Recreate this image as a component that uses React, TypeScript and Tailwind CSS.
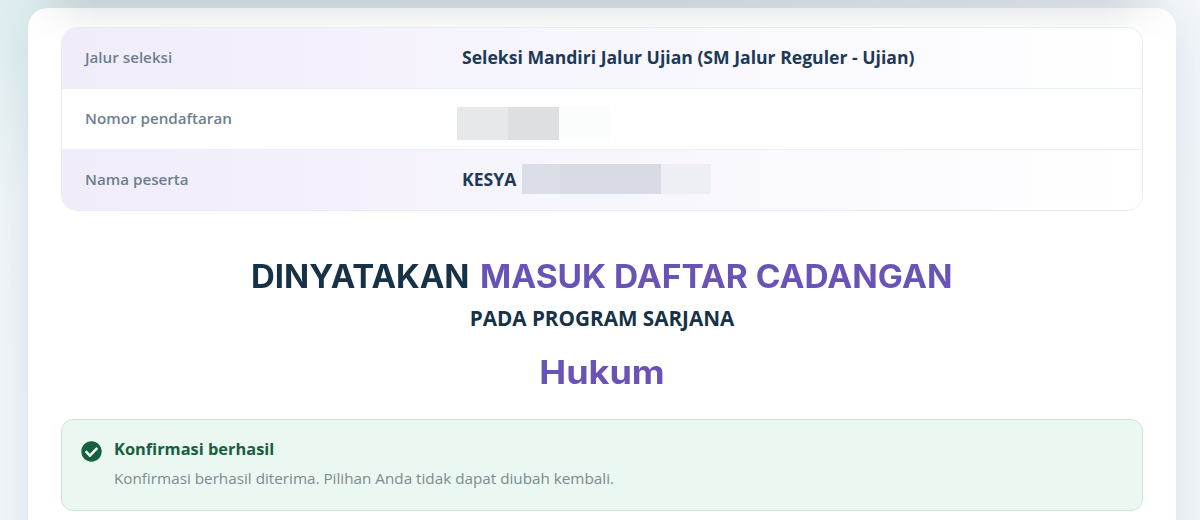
import React from 'react';
import { FaCheckCircle } from 'react-icons/fa';

const Row: React.FC<{ label: string; tinted?: boolean; children: React.ReactNode }> = ({ label, tinted, children }) => (
  <div
    className={`flex h-[61px] items-center border-b border-[#e7f0f4] pl-[23px] last:h-[60px] last:border-b-0 ${
      tinted ? 'bg-linear-to-r from-[#f0ecfa] via-[#f7f5fd] via-45% to-white' : 'bg-white'
    }`}
  >
    <dt className="w-[377px] shrink-0 pb-0.5 text-[15.2px] font-semibold text-[#6d7f8d]">{label}</dt>
    <dd className="flex items-center pb-0.5 text-[17.6px] font-bold whitespace-nowrap text-[#1c3a56]">{children}</dd>
  </div>
);

export default function App() {
  return (
    <div className="h-[520px] overflow-hidden bg-linear-to-r from-[#dcecee] via-[#e2e9ee] to-[#f2f6fa] font-['Open_Sans','Noto_Sans',sans-serif]">
      <div className="relative h-full bg-linear-to-b from-[#f2f6f9]/10 via-[#f2f6f9]/90 via-40% to-[#f2f6f9]">
        {/* Shadow of the header above the card */}
        <div className="pointer-events-none absolute inset-x-6 top-0 z-10 h-10 bg-linear-to-b from-[#26343f]/11 to-transparent mask-x-from-94% mask-x-to-100%" />

        <div className="px-7 pt-2 pr-6">
          <main className="h-[560px] rounded-t-[20px] bg-white px-[33px] pt-[19px] shadow-[0_12px_40px_rgba(60,100,120,0.14)]">
            <dl className="relative z-20 h-[184px] overflow-hidden rounded-2xl border border-[#e6edf1]">
              <Row label="Jalur seleksi" tinted>
                Seleksi Mandiri Jalur Ujian (SM Jalur Reguler - Ujian)
              </Row>
              <Row label="Nomor pendaftaran">
                <div className="mt-2.5 -ml-[5px] flex h-[33px]">
                  <span className="w-[51px] bg-[#e6e8ea]" />
                  <span className="w-[51px] bg-[#dde0e3]" />
                  <span className="w-[51px] bg-[#fbfcfc]" />
                </div>
              </Row>
              <Row label="Nama peserta" tinted>
                <span className="w-[60px]">KESYA</span>
                <div className="flex h-[30px]">
                  <span className="w-[38px] bg-[#dbdee6]" />
                  <span className="w-[101px] bg-[#d8dbe4]" />
                  <span className="w-[50px] bg-[#eeeff4]" />
                </div>
              </Row>
            </dl>

            <section className="h-[208px] pt-[46px] text-center">
              <h1 className="flex h-10 items-center justify-center gap-[10px] font-['Inter',sans-serif] text-[32px] font-bold whitespace-nowrap text-[#173246] [font-optical-sizing:none]">
                <span className="w-[219px] origin-left scale-x-[1.03] text-left">DINYATAKAN</span>
                <span className="w-[474px] origin-left scale-x-[1.046] text-left text-[#6a53b7]">MASUK DAFTAR CADANGAN</span>
              </h1>
              <p className="mt-[7px] text-[20.7px] leading-7 font-bold text-[#173246]">PADA PROGRAM SARJANA</p>
              <h2 className="mt-[21px] scale-x-[1.125] font-['Inter',sans-serif] text-[32px] leading-10 font-bold text-[#6a53b7] [font-optical-sizing:none]">Hukum</h2>
            </section>

            <div className="flex h-[92px] gap-3 rounded-xl border border-[#cbe7d9] bg-[#ebf7f1] pt-[17px] pl-[19px]">
              <FaCheckCircle className="mt-1 size-[21px] shrink-0 text-[#17603f]" />
              <div>
                <h3 className="-mt-px text-[16.4px] leading-[26px] font-bold text-[#17603f]">Konfirmasi berhasil</h3>
                <p className="mt-[3px] text-[15.25px] leading-[26px] text-[#7c8b8f]">
                  Konfirmasi berhasil diterima. Pilihan Anda tidak dapat diubah kembali.
                </p>
              </div>
            </div>
          </main>
        </div>
      </div>
    </div>
  );
}
